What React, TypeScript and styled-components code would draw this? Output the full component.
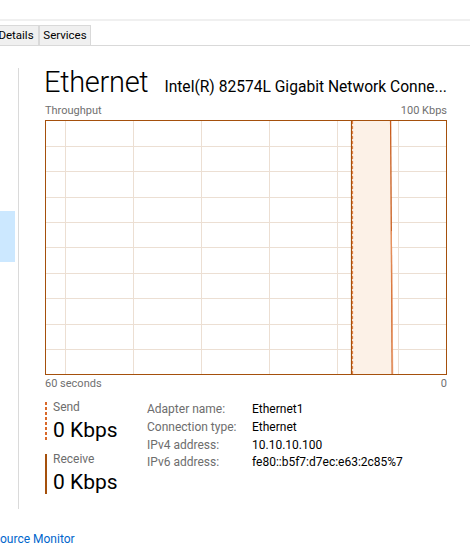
import React from "react";
import styled, { createGlobalStyle } from "styled-components";

const GlobalStyle = createGlobalStyle`
  html, body {
    margin: 0;
    padding: 0;
    background: #ffffff;
    overflow: hidden;
  }
  body {
    font-family: Roboto, "Noto Sans", "Liberation Sans", sans-serif;
    color: #000000;
  }
`;

const Page = styled.div`
  width: 470px;
  height: 555px;
  overflow: hidden;
  display: flex;
  flex-direction: column;
`;

const MenuBand = styled.div`
  height: 19px;
  border-bottom: 2px solid #f0f0f0;
  flex: none;
`;

const TabStrip = styled.div`
  display: flex;
  margin-top: 4px;
  margin-left: -7px;
  border-bottom: 1px solid #d9d9d9;
  flex: none;
`;

const Tab = styled.div<{ $width: number }>`
  width: ${(p) => p.$width}px;
  height: 20px;
  box-sizing: border-box;
  border: 1px solid #d9d9d9;
  border-bottom: none;
  background: #f0f0f0;
  font-size: 11.5px;
  line-height: 18px;
  text-align: center;
  color: #000;
`;

const Body = styled.div`
  display: flex;
  flex: none;
  min-width: 0;
`;

const Sidebar = styled.div`
  width: 18px;
  flex: none;
`;

const SideItem = styled.div<{ $selected?: boolean }>`
  margin-top: 165px;
  width: 15px;
  height: 51px;
  background: ${(p) => (p.$selected ? "#cce8ff" : "transparent")};
`;

const Panel = styled.div`
  margin-top: 22px;
  height: 441px;
  box-sizing: border-box;
  flex: 1;
  min-width: 0;
  border-left: 1px solid #dadada;
  padding: 2px 23px 0 26px;
  display: flex;
  flex-direction: column;
`;

const Header = styled.div`
  display: flex;
  align-items: baseline;
  height: 24px;
  gap: 16px;
  min-width: 0;
`;

const Title = styled.div`
  font-size: 29px;
  font-weight: 300;
  letter-spacing: -0.3px;
  line-height: 24px;
  margin-left: -1px;
  white-space: nowrap;
`;

const Subtitle = styled.div`
  flex: 1;
  min-width: 0;
  font-size: 15.6px;
  line-height: 20px;
  white-space: nowrap;
  overflow: hidden;
`;

const AxisRow = styled.div<{ $gap: number }>`
  display: flex;
  justify-content: space-between;
  height: 14px;
  margin-top: ${(p) => p.$gap}px;
  font-size: 11px;
  line-height: 14px;
  color: #707070;
`;

const Graph = styled.div`
  margin-top: 2px;
  height: 255px;
  box-sizing: border-box;
  border: 1px solid #a5500c;
  flex: none;
  svg {
    display: block;
  }
`;

const Bottom = styled.div`
  display: flex;
  margin-top: 9px;
`;

const Rates = styled.div`
  width: 102px;
  flex: none;
  padding-top: 2px;
  display: flex;
  flex-direction: column;
  gap: 12px;
`;

const RateBlock = styled.div<{ $dashed?: boolean }>`
  height: 40px;
  padding-left: 8px;
  background-image: ${(p) =>
    p.$dashed
      ? "repeating-linear-gradient(to bottom, #d9692a 0 3px, transparent 3px 5px)"
      : "linear-gradient(#a5500c, #a5500c)"};
  background-repeat: no-repeat;
  background-size: 2px 100%;
  background-position: left top;
`;

const RateLabel = styled.div`
  font-size: 12px;
  line-height: 11px;
  color: #6d6d6d;
`;

const RateValue = styled.div`
  font-size: 21px;
  line-height: 35px;
  color: #000;
  white-space: nowrap;
`;

const InfoGrid = styled.div`
  display: grid;
  grid-template-columns: 105px auto;
  grid-auto-rows: 17.8px;
  font-size: 12px;
  line-height: 18px;
`;

const InfoLabel = styled.div`
  color: #6d6d6d;
  white-space: nowrap;
`;

const InfoValue = styled.div`
  color: #000;
  white-space: nowrap;
`;

const FooterLink = styled.a`
  display: block;
  margin-top: 22px;
  font-size: 12px;
  line-height: 16px;
  color: #0066cc;
  text-decoration: none;
  white-space: nowrap;
`;

const vLines = [19.5, 87.5, 155.5, 223.5, 291.5, 352.5];
const hLines = [25.5, 50.5, 76.5, 101.5, 126.5, 152.5, 177.5, 203.5, 228.5];

const ThroughputChart: React.FC = () => (
  <svg width="400" height="253" viewBox="0 0 400 253">
    {vLines.map((x) => (
      <line key={"v" + x} x1={x} y1={0} x2={x} y2={253} stroke="#ecdfd3" strokeWidth={1} />
    ))}
    {hLines.map((y) => (
      <line key={"h" + y} x1={0} y1={y} x2={400} y2={y} stroke="#ecdfd3" strokeWidth={1} />
    ))}
    <polygon points="305.5,253 305.5,0 344.5,0 346,253" fill="#fcf1e7" />
    <line x1={305.5} y1={0} x2={305.5} y2={253} stroke="#a5500c" strokeWidth={1.2} />
    <line
      x1={306.6}
      y1={0}
      x2={306.6}
      y2={253}
      stroke="#e07a3a"
      strokeWidth={1}
      strokeDasharray="3 2"
    />
    <line x1={344.6} y1={0} x2={346.2} y2={253} stroke="#c95c1c" strokeWidth={1.3} />
    <line x1={345.4} y1={110} x2={346.8} y2={253} stroke="#f0a070" strokeWidth={0.8} />
  </svg>
);

const info: [string, string][] = [
  ["Adapter name:", "Ethernet1"],
  ["Connection type:", "Ethernet"],
  ["IPv4 address:", "10.10.10.100"],
  ["IPv6 address:", "fe80::b5f7:d7ec:e63:2c85%7"],
];

export default function App() {
  return (
    <Page>
      <GlobalStyle />
      <MenuBand />
      <TabStrip>
        <Tab $width={46}>Details</Tab>
        <Tab $width={52}>Services</Tab>
      </TabStrip>
      <Body>
        <Sidebar>
          <SideItem $selected />
        </Sidebar>
        <Panel>
          <Header>
            <Title>Ethernet</Title>
            <Subtitle>Intel(R) 82574L Gigabit Network Conne...</Subtitle>
          </Header>
          <AxisRow $gap={10}>
            <span>Throughput</span>
            <span>100 Kbps</span>
          </AxisRow>
          <Graph>
            <ThroughputChart />
          </Graph>
          <AxisRow $gap={2}>
            <span>60 seconds</span>
            <span>0</span>
          </AxisRow>
          <Bottom>
            <Rates>
              <RateBlock $dashed>
                <RateLabel>Send</RateLabel>
                <RateValue>0 Kbps</RateValue>
              </RateBlock>
              <RateBlock>
                <RateLabel>Receive</RateLabel>
                <RateValue>0 Kbps</RateValue>
              </RateBlock>
            </Rates>
            <InfoGrid>
              {info.map(([k, v]) => (
                <React.Fragment key={k}>
                  <InfoLabel>{k}</InfoLabel>
                  <InfoValue>{v}</InfoValue>
                </React.Fragment>
              ))}
            </InfoGrid>
          </Bottom>
        </Panel>
      </Body>
      <FooterLink href="#">ource Monitor</FooterLink>
    </Page>
  );
}
